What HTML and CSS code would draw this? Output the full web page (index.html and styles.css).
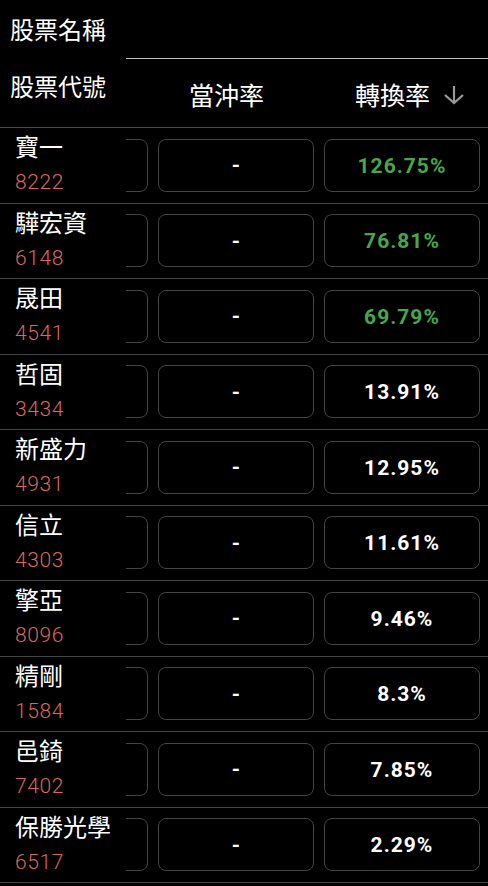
FILE: index.html
```html
<!DOCTYPE html>
<html lang="zh-Hant">
<head>
<meta charset="utf-8">
<link rel="stylesheet" href="styles.css">
</head>
<body>
<div class="table">
  <div class="header">
    <div class="hleft">
      <div class="hl1">股票名稱</div>
      <div class="hl2">股票代號</div>
    </div>
    <div class="hright">
      <div class="htop"></div>
      <div class="hcols">
        <div class="hcol">當沖率</div>
        <div class="hcol">轉換率
          <svg class="arrow" width="24" height="20" viewBox="0 0 24 20"><path d="M12 1 V18 M3 10 L12 18 L21 10" fill="none" stroke="#9a9a9a" stroke-width="2.2"/></svg>
        </div>
      </div>
    </div>
  </div>

  <div class="row">
    <div class="name"><div class="nm">寶一</div><div class="code">8222</div></div>
    <div class="cells"><div class="col first"><div class="box"></div></div><div class="col"><div class="box">-</div></div><div class="col"><div class="box val green">126.75%</div></div></div>
  </div>
  <div class="row">
    <div class="name"><div class="nm">驊宏資</div><div class="code">6148</div></div>
    <div class="cells"><div class="col first"><div class="box"></div></div><div class="col"><div class="box">-</div></div><div class="col"><div class="box val green">76.81%</div></div></div>
  </div>
  <div class="row">
    <div class="name"><div class="nm">晟田</div><div class="code">4541</div></div>
    <div class="cells"><div class="col first"><div class="box"></div></div><div class="col"><div class="box">-</div></div><div class="col"><div class="box val green">69.79%</div></div></div>
  </div>
  <div class="row">
    <div class="name"><div class="nm">哲固</div><div class="code">3434</div></div>
    <div class="cells"><div class="col first"><div class="box"></div></div><div class="col"><div class="box">-</div></div><div class="col"><div class="box val">13.91%</div></div></div>
  </div>
  <div class="row">
    <div class="name"><div class="nm">新盛力</div><div class="code">4931</div></div>
    <div class="cells"><div class="col first"><div class="box"></div></div><div class="col"><div class="box">-</div></div><div class="col"><div class="box val">12.95%</div></div></div>
  </div>
  <div class="row">
    <div class="name"><div class="nm">信立</div><div class="code">4303</div></div>
    <div class="cells"><div class="col first"><div class="box"></div></div><div class="col"><div class="box">-</div></div><div class="col"><div class="box val">11.61%</div></div></div>
  </div>
  <div class="row">
    <div class="name"><div class="nm">擎亞</div><div class="code">8096</div></div>
    <div class="cells"><div class="col first"><div class="box"></div></div><div class="col"><div class="box">-</div></div><div class="col"><div class="box val">9.46%</div></div></div>
  </div>
  <div class="row">
    <div class="name"><div class="nm">精剛</div><div class="code">1584</div></div>
    <div class="cells"><div class="col first"><div class="box"></div></div><div class="col"><div class="box">-</div></div><div class="col"><div class="box val">8.3%</div></div></div>
  </div>
  <div class="row">
    <div class="name"><div class="nm">邑錡</div><div class="code">7402</div></div>
    <div class="cells"><div class="col first"><div class="box"></div></div><div class="col"><div class="box">-</div></div><div class="col"><div class="box val">7.85%</div></div></div>
  </div>
  <div class="row">
    <div class="name"><div class="nm">保勝光學</div><div class="code">6517</div></div>
    <div class="cells"><div class="col first"><div class="box"></div></div><div class="col"><div class="box">-</div></div><div class="col"><div class="box val">2.29%</div></div></div>
  </div>
</div>
</body>
</html>
```
FILE: styles.css
```css
html, body {
  margin: 0;
  padding: 0;
  background: #000;
  width: 488px;
  height: 886px;
  overflow: hidden;
}
body {
  font-family: Roboto, "Noto Sans CJK TC", sans-serif;
  color: #fff;
}
.table {
  width: 488px;
}
.header {
  display: flex;
  height: 127px;
  border-bottom: 1px solid #4a4a4a;
}
.hleft {
  width: 126px;
  flex: none;
  font-family: "Noto Sans CJK TC", sans-serif;
  font-size: 24px;
  color: #fff;
}
.hl1 {
  height: 58px;
  line-height: 58px;
  padding-left: 10px;
}
.hl2 {
  line-height: 56px;
  padding-left: 10px;
}
.hright {
  flex: 1;
  display: flex;
  flex-direction: column;
}
.htop {
  height: 58px;
  border-bottom: 1px solid #bdbdbd;
  box-sizing: border-box;
  margin-top: 1px;
}
.hcols {
  flex: 1;
  display: flex;
  margin-left: 27px;
}
.hcol {
  width: 166px;
  box-sizing: border-box;
  padding-left: 36px;
  display: flex;
  align-items: center;
  font-family: "Noto Sans CJK TC", sans-serif;
  font-size: 25px;
  color: #fff;
  padding-top: 2px;
}
.arrow {
  margin-left: 12px;
  margin-top: 2px;
}
.row {
  display: flex;
  height: 74.5px;
  border-bottom: 1px solid #444;
}
.name {
  width: 126px;
  flex: none;
  padding-left: 15px;
  box-sizing: border-box;
  display: flex;
  flex-direction: column;
  padding-top: 1px;
}
.nm {
  font-family: "Noto Sans CJK TC", sans-serif;
  font-size: 24px;
  line-height: 34px;
  color: #fff;
  white-space: nowrap;
}
.code {
  font-family: Roboto, sans-serif;
  font-weight: 300;
  font-size: 21px;
  line-height: 30px;
  margin-top: 4px;
  color: #dc6660;
  letter-spacing: 0.6px;
}
.cells {
  flex: 1;
  display: flex;
  overflow: hidden;
  align-items: center;
}
.col {
  width: 166px;
  flex: none;
  padding: 0 5px;
  box-sizing: border-box;
}
.col.first {
  margin-left: -139px;
}
.box {
  height: 53px;
  border: 1px solid #444;
  border-radius: 8px;
  box-sizing: border-box;
  display: flex;
  align-items: center;
  justify-content: center;
  font-family: Roboto, sans-serif;
  font-weight: 700;
  font-size: 21px;
  color: #fff;
}
.val {
  letter-spacing: 1px;
  padding-top: 1px;
}
.green {
  color: #46a84a;
}
```
